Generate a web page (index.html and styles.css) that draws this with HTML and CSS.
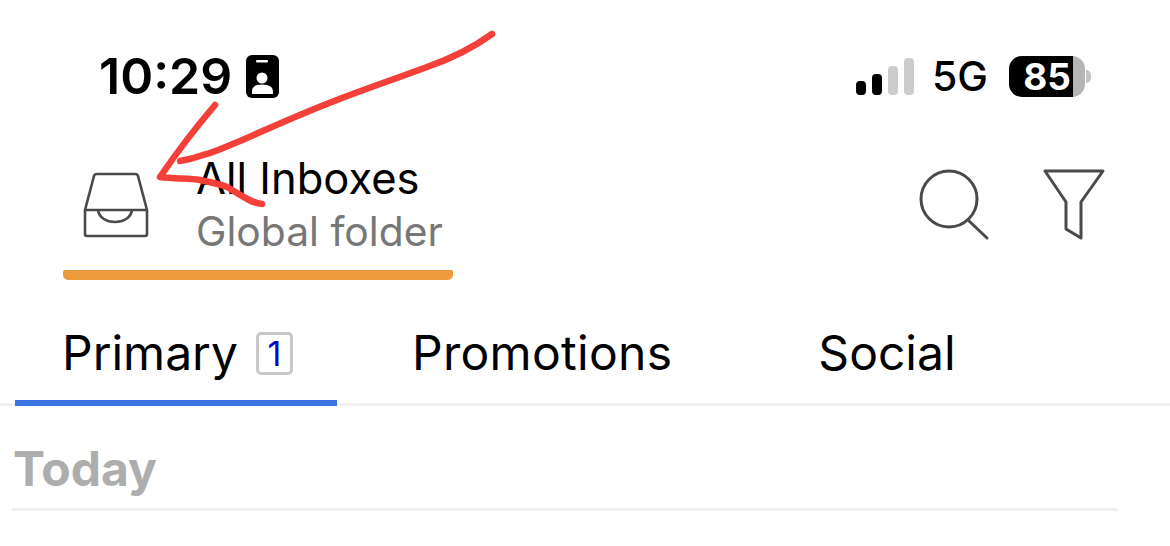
FILE: index.html
```html
<!DOCTYPE html>
<html lang="en">
<head>
    <meta charset="UTF-8">
    <meta name="viewport" content="width=device-width, initial-scale=1.0">
    <title>All Inboxes</title>
    <link rel="stylesheet" href="styles.css">
</head>
<body>
    <div class="page">
        <div class="status-bar">
            <div class="status-left">
                <span class="clock">10:29</span>
                <svg class="badge-icon" width="33" height="43" viewBox="0 0 33 43">
                    <rect width="33" height="43" rx="6" fill="#000"/>
                    <rect x="10" y="5" width="12" height="2.500" rx="1.200" fill="#fff"/>
                    <circle cx="16" cy="23" r="5.500" fill="#fff"/>
                    <path d="M6 39 L6 36 Q6 29.500 16 29.500 Q27 29.500 27 36 L27 39 Z" fill="#fff"/>
                </svg>
            </div>
            <div class="status-right">
                <div class="signal">
                    <span class="bar bar-1"></span>
                    <span class="bar bar-2"></span>
                    <span class="bar bar-3"></span>
                    <span class="bar bar-4"></span>
                </div>
                <span class="network">5G</span>
                <div class="battery">
                    <div class="battery-body"><span class="battery-level">85</span></div>
                    <span class="battery-nub"></span>
                </div>
            </div>
        </div>

        <div class="header">
            <div class="folder">
                <svg class="inbox-icon" width="66" height="66" viewBox="0 0 66 66" fill="none" stroke="#4a4a4a" stroke-width="2.600" stroke-linejoin="round">
                    <path d="M2 38 L11 4 Q11.500 2 14 2 L52 2 Q54.500 2 55 4 L64 38 L64 62 Q64 64 62 64 L4 64 Q2 64 2 62 Z"/>
                    <path d="M2 38 L64 38"/>
                    <path d="M15 38 C17 54 47 54 49 38"/>
                </svg>
                <div class="folder-text">
                    <div class="folder-title">All Inboxes</div>
                    <div class="folder-sub">Global folder</div>
                </div>
            </div>
            <div class="actions">
                <svg width="72" height="72" viewBox="0 0 72 72" fill="none" stroke="#4a4a4a" stroke-width="3" stroke-linecap="round">
                    <circle cx="30" cy="30" r="28"/>
                    <path d="M49 51 L68 69"/>
                </svg>
                <svg width="62" height="72" viewBox="0 0 62 72" fill="none" stroke="#4a4a4a" stroke-width="3" stroke-linejoin="round">
                    <path d="M2 2 L60 2 L38 33 L38 69 L23 60 L23 33 Z"/>
                </svg>
            </div>
        </div>
        <div class="account-line"></div>

        <div class="tabs">
            <div class="tab tab-primary">Primary <span class="count">1</span></div>
            <div class="tab tab-promotions">Promotions</div>
            <div class="tab tab-social">Social</div>
        </div>

        <div class="section">
            <div class="section-title">Today</div>
        </div>

        <svg class="scribble" width="1170" height="546" viewBox="0 0 1170 546" fill="none" stroke="#f5403a" stroke-width="6.500" stroke-linecap="round" stroke-linejoin="round">
            <path d="M492 34 C470 50 450 59 427 67 C395 79 365 89 337 100 C300 114 270 128 240 141 C225 147 212 153 203 155 C195 158 186 160 180 161"/>
            <path d="M215 105 C198 125 175 155 160 177 C175 179 190 178 200 180 C210 182 220 184 227 187 C238 193 250 203 262 204"/>
        </svg>
    </div>
</body>
</html>
```

FILE: styles.css
```css
body {
    margin: 0;
    background-color: #fff;
    color: #000;
    font-family: Inter, "Liberation Sans", sans-serif;
}
.page {
    position: relative;
    width: 1170px;
    height: 546px;
    overflow: hidden;
}
.status-bar {
    display: flex;
    justify-content: space-between;
    align-items: center;
    height: 42px;
    padding: 55px 79px 0 99px;
}
.status-left {
    display: flex;
    align-items: center;
    gap: 14px;
}
.clock {
    font-size: 50px;
    font-weight: 600;
    line-height: 42px;
}
.status-right {
    display: flex;
    align-items: center;
}
.signal {
    display: flex;
    align-items: flex-end;
    gap: 6px;
    height: 37px;
}
.bar {
    width: 10px;
    border-radius: 4px;
    background-color: #000;
}
.bar-1 { height: 14px; }
.bar-2 { height: 21px; }
.bar-3 { height: 29px; background-color: #ccc; }
.bar-4 { height: 37px; background-color: #ccc; }
.network {
    margin-left: 18px;
    font-size: 41px;
    font-weight: 500;
}
.battery {
    display: flex;
    align-items: center;
    margin-left: 21px;
}
.battery-body {
    width: 76px;
    height: 41px;
    border-radius: 13px;
    background: linear-gradient(to right, #000 0, #000 64px, #b5b5b5 64px);
    text-align: center;
}
.battery-level {
    color: #fff;
    font-size: 37px;
    font-weight: 700;
    line-height: 41px;
}
.battery-nub {
    width: 5px;
    height: 13px;
    margin-left: 1px;
    border-radius: 0 6px 6px 0;
    background-color: #c4c4c4;
}
.header {
    display: flex;
    justify-content: space-between;
    align-items: center;
    margin-top: 62px;
    padding: 0 65px 0 83px;
    height: 92px;
}
.folder {
    display: flex;
    align-items: center;
    gap: 47px;
}
.folder-title {
    font-size: 43.500px;
    line-height: 53px;
}
.folder-sub {
    font-size: 40.800px;
    line-height: 53px;
    color: #777;
}
.actions {
    display: flex;
    align-items: center;
    gap: 52px;
}
.account-line {
    width: 390px;
    height: 10px;
    margin: 19px 0 0 63px;
    border-radius: 2px 2px 5px 5px;
    background-color: #ec9a3c;
}
.tabs {
    display: flex;
    margin-top: 16px;
    height: 110px;
    box-sizing: border-box;
    padding-left: 15px;
    border-bottom: 3px solid #f0f0f0;
}
.tab {
    height: 110px;
    box-sizing: border-box;
    padding-top: 30px;
    font-size: 48px;
    line-height: 54px;
    white-space: nowrap;
}
.tab-primary {
    display: flex;
    width: 322px;
    padding-left: 47px;
    border-bottom: 6px solid #3a73e4;
}
.tab-promotions {
    margin-left: 75px;
    letter-spacing: 0.3px;
}
.tab-social { margin-left: 146px; }
.count {
    width: 31px;
    height: 37px;
    margin: 6px 0 0 18px;
    border: 3px solid #c8c8c8;
    border-radius: 5px;
    color: #0000d0;
    font-size: 34px;
    line-height: 37px;
    text-align: center;
}
.section {
    width: 1106px;
    margin: 0 0 0 12px;
    height: 105px;
    box-sizing: border-box;
    border-bottom: 3px solid #f0f0f0;
}
.section-title {
    padding: 35px 0 0 1px;
    font-size: 48px;
    font-weight: 700;
    line-height: 56px;
    color: #adadad;
}
.scribble {
    position: absolute;
    top: 0;
    left: 0;
}
```
